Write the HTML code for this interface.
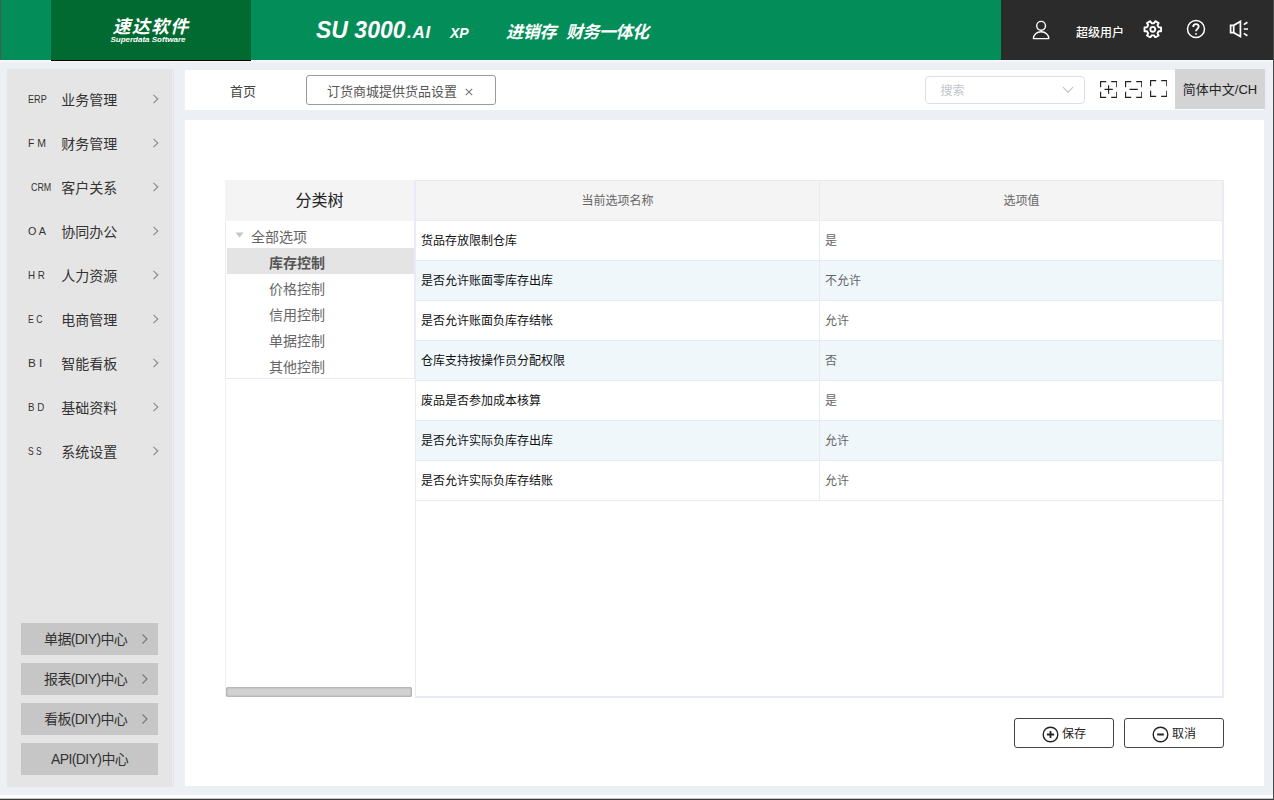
<!DOCTYPE html>
<html lang="zh-CN">
<head>
<meta charset="utf-8">
<title>订货商城提供货品设置</title>
<style>
*{box-sizing:border-box;margin:0;padding:0}
html,body{width:1274px;height:800px;overflow:hidden}
body{position:relative;background:#eceff4;font-family:"Liberation Sans","Noto Sans CJK SC",sans-serif;color:#333;font-size:12px}
.abs{position:absolute}
/* header */
#hdr{left:0;top:0;width:1274px;height:60px;background:#038d58}
#hdr .edge{left:0;top:0;width:1px;height:60px;background:#4a5a52}
#logo{left:51px;top:0;width:200px;height:60px;background:#006a30;color:#fff;text-align:center}
#logo .cn{left:0px;width:200px;top:15px;font-size:18px;line-height:24px;font-weight:700;font-style:italic;letter-spacing:1.3px}
#logo .en{left:-3px;width:200px;top:35px;font-size:8px;line-height:9px;font-weight:700;font-style:italic}
.ht{color:#fff;font-weight:700;font-style:italic;white-space:nowrap}
#dark{left:1001px;top:0;width:273px;height:60px;background:#2b2b2b}
/* sidebar */
#side{left:7px;top:69px;width:165px;height:718px;background:#e6e5e5}
.mi{left:0;width:165px;height:44px}
.mi .pre{left:21px;top:0;line-height:44px;font-size:11px;color:#333;white-space:pre;transform-origin:0 50%}
.mi .nm{left:54.3px;top:0.6px;line-height:44px;font-size:14px;color:#333;white-space:nowrap}
.mi svg{left:145px;top:16px}
.diy{left:14px;width:137px;height:32px;background:#c6c6c6;font-size:14px;color:#333;line-height:32px;white-space:nowrap;letter-spacing:-0.6px}
/* tab bar */
#tabs{left:185px;top:70px;width:1079px;height:40px;background:#fff}
/* panel */
#panel{left:185px;top:120px;width:1079px;height:666px;background:#fff}
.row{left:415px;width:808px;height:40px;border-bottom:1px solid #e8ebf3}
.row .a{left:6px;top:1.2px;line-height:39px;font-size:12px;color:#111;white-space:nowrap}
.row .b{left:410px;top:1.2px;line-height:39px;font-size:12px;color:#666;white-space:nowrap}
.row.alt{background:#f0f7fb}
.tn{left:227px;width:187px;height:26px;line-height:26px;font-size:14px;color:#666;white-space:nowrap}
.tn span{position:absolute;left:42px;top:1.5px}
.btn{top:718px;width:100px;height:30px;border:1px solid #444;border-radius:3px;background:#fff;font-size:12px;color:#222;line-height:28px}
</style>
</head>
<body>
<!-- HEADER -->
<div id="hdr" class="abs">
  <div class="abs edge"></div>
  <div id="logo" class="abs">
    <div class="abs cn">速达软件</div>
    <div class="abs en">Superdata Software</div>
  </div>
  <div class="abs ht" style="left:316px;top:16px;font-size:23px;line-height:28px">SU 3000</div>
  <div class="abs ht" style="left:407px;top:22px;font-size:17px;line-height:22px;letter-spacing:0.8px">.AI</div>
  <div class="abs ht" style="left:450px;top:23px;font-size:14px;line-height:20px">XP</div>
  <div class="abs ht" style="left:506px;top:20.5px;font-size:17px;line-height:24px;letter-spacing:-0.3px">进销存</div>
  <div class="abs ht" style="left:566px;top:20.5px;font-size:17px;line-height:24px;letter-spacing:-0.5px">财务一体化</div>
  <div id="dark" class="abs">
    <svg class="abs" style="left:30px;top:20px" width="20" height="20" viewBox="0 0 20 20" fill="none" stroke="#fff" stroke-width="1.4"><circle cx="10.1" cy="5.8" r="4.4"/><path d="M2.4 18.6 A7.7 6.9 0 0 1 17.8 18.6 Z" stroke-linejoin="round"/></svg>
    <div class="abs" style="left:75px;top:23.5px;font-size:12px;line-height:18px;color:#fff;font-weight:500;white-space:nowrap">超级用户</div>
    <svg class="abs" style="left:142.4px;top:19.6px" width="19.6" height="18.6" viewBox="0 0 20 19" fill="none" stroke="#fff" stroke-width="1.9" stroke-linejoin="round"><path d="M15.96 7.45 L18.48 7.54 L18.48 11.46 L15.96 11.55 L14.75 13.63 L15.93 15.86 L12.54 17.82 L11.20 15.68 L8.80 15.68 L7.46 17.82 L4.07 15.86 L5.25 13.63 L4.04 11.55 L1.52 11.46 L1.52 7.54 L4.04 7.45 L5.25 5.37 L4.07 3.14 L7.46 1.18 L8.80 3.32 L11.20 3.32 L12.54 1.18 L15.93 3.14 L14.75 5.37 Z"/><circle cx="10" cy="9.5" r="2.5"/></svg>
    <svg class="abs" style="left:185.2px;top:19.3px" width="20" height="20" viewBox="0 0 20 20" fill="none" stroke="#fff" stroke-width="1.5"><circle cx="10" cy="10" r="8.5"/><path d="M7.2 7.9 C7.2 6.1 8.4 5.2 10 5.2 S12.7 6.2 12.7 7.8 C12.7 9.8 10 9.9 10 12.2" stroke-width="1.8"/><circle cx="10" cy="14.9" r="0.95" fill="#fff" stroke="none"/></svg>
    <svg class="abs" style="left:228px;top:20px" width="21" height="19" viewBox="0 0 21 19" fill="none" stroke="#fff" stroke-width="1.7"><path d="M1.6 5.3 H4.7 L11.4 1.4 V16.6 L4.7 12.7 H1.6 Z M4.7 5.3 V12.7" stroke-linejoin="miter"/><path d="M14.8 4.6 L18.4 2.2 M14.8 9 H19 M14.8 13.4 L18.4 15.8" /></svg>
  </div>
</div>

<!-- SIDEBAR -->
<div id="side" class="abs">
  <div class="abs mi" style="top:8px"><div class="abs pre" style="left:21.3px;transform:scaleX(0.83)">ERP</div><div class="abs nm">业务管理</div><svg class="abs" width="8" height="12" viewBox="0 0 8 12" fill="none" stroke="#888" stroke-width="1.1"><path d="M1.5 1.8 L5.8 6 L1.5 10.2"/></svg></div>
  <div class="abs mi" style="top:52px"><div class="abs pre" style="left:20.5px;transform:scaleX(0.95)">F M</div><div class="abs nm">财务管理</div><svg class="abs" width="8" height="12" viewBox="0 0 8 12" fill="none" stroke="#888" stroke-width="1.1"><path d="M1.5 1.8 L5.8 6 L1.5 10.2"/></svg></div>
  <div class="abs mi" style="top:96px"><div class="abs pre" style="left:23.5px;transform:scaleX(0.81)">CRM</div><div class="abs nm">客户关系</div><svg class="abs" width="8" height="12" viewBox="0 0 8 12" fill="none" stroke="#888" stroke-width="1.1"><path d="M1.5 1.8 L5.8 6 L1.5 10.2"/></svg></div>
  <div class="abs mi" style="top:140px"><div class="abs pre" style="left:21px;transform:scaleX(0.98)">O A</div><div class="abs nm">协同办公</div><svg class="abs" width="8" height="12" viewBox="0 0 8 12" fill="none" stroke="#888" stroke-width="1.1"><path d="M1.5 1.8 L5.8 6 L1.5 10.2"/></svg></div>
  <div class="abs mi" style="top:184px"><div class="abs pre" style="left:20.8px;transform:scaleX(0.886)">H R</div><div class="abs nm">人力资源</div><svg class="abs" width="8" height="12" viewBox="0 0 8 12" fill="none" stroke="#888" stroke-width="1.1"><path d="M1.5 1.8 L5.8 6 L1.5 10.2"/></svg></div>
  <div class="abs mi" style="top:228px"><div class="abs pre" style="left:20.8px;transform:scaleX(0.785)">E C</div><div class="abs nm">电商管理</div><svg class="abs" width="8" height="12" viewBox="0 0 8 12" fill="none" stroke="#888" stroke-width="1.1"><path d="M1.5 1.8 L5.8 6 L1.5 10.2"/></svg></div>
  <div class="abs mi" style="top:272px"><div class="abs pre" style="left:20.8px;transform:scaleX(1.07)">B I</div><div class="abs nm">智能看板</div><svg class="abs" width="8" height="12" viewBox="0 0 8 12" fill="none" stroke="#888" stroke-width="1.1"><path d="M1.5 1.8 L5.8 6 L1.5 10.2"/></svg></div>
  <div class="abs mi" style="top:316px"><div class="abs pre" style="left:20.8px;transform:scaleX(0.883)">B D</div><div class="abs nm">基础资料</div><svg class="abs" width="8" height="12" viewBox="0 0 8 12" fill="none" stroke="#888" stroke-width="1.1"><path d="M1.5 1.8 L5.8 6 L1.5 10.2"/></svg></div>
  <div class="abs mi" style="top:360px"><div class="abs pre" style="left:20.8px;transform:scaleX(0.767)">S S</div><div class="abs nm">系统设置</div><svg class="abs" width="8" height="12" viewBox="0 0 8 12" fill="none" stroke="#888" stroke-width="1.1"><path d="M1.5 1.8 L5.8 6 L1.5 10.2"/></svg></div>
  <div class="abs diy" style="top:554px"><span class="abs" style="left:23px;top:0">单据(DIY)中心</span><svg class="abs" style="left:120px;top:10px" width="8" height="12" viewBox="0 0 8 12" fill="none" stroke="#777" stroke-width="1.1"><path d="M1.5 1.5 L6 6 L1.5 10.5"/></svg></div>
  <div class="abs diy" style="top:594px"><span class="abs" style="left:23px;top:0">报表(DIY)中心</span><svg class="abs" style="left:120px;top:10px" width="8" height="12" viewBox="0 0 8 12" fill="none" stroke="#777" stroke-width="1.1"><path d="M1.5 1.5 L6 6 L1.5 10.5"/></svg></div>
  <div class="abs diy" style="top:634px"><span class="abs" style="left:23px;top:0">看板(DIY)中心</span><svg class="abs" style="left:120px;top:10px" width="8" height="12" viewBox="0 0 8 12" fill="none" stroke="#777" stroke-width="1.1"><path d="M1.5 1.5 L6 6 L1.5 10.5"/></svg></div>
  <div class="abs diy" style="top:674px"><span class="abs" style="left:30px;top:0">API(DIY)中心</span></div>
</div>

<div class="abs" style="left:172px;top:69px;width:1px;height:718px;background:#ececee"></div>
<div class="abs" style="left:173px;top:69px;width:1px;height:718px;background:#e4e5ea"></div>
<!-- TAB BAR -->
<div id="tabs" class="abs">
  <div class="abs" style="left:45px;top:1.5px;line-height:40px;font-size:13px;color:#444;white-space:nowrap">首页</div>
  <div class="abs" style="left:121px;top:5px;width:190px;height:30px;border:1px solid #9a9a9a;border-radius:3px;background:#fff"></div>
  <div class="abs" style="left:142px;top:1.5px;line-height:40px;font-size:13px;color:#555;white-space:nowrap">订货商城提供货品设置</div>
  <svg class="abs" style="left:279px;top:17px" width="10" height="10" viewBox="0 0 10 10" stroke="#777" stroke-width="1.1" fill="none"><path d="M1.8 1.8 L8.2 8.2 M8.2 1.8 L1.8 8.2"/></svg>
  <div class="abs" style="left:740px;top:6px;width:160px;height:28px;border:1px solid #dcdfe6;border-radius:4px;background:#fff"></div>
  <div class="abs" style="left:755.5px;top:7px;line-height:28px;font-size:12px;color:#c0c4cc;white-space:nowrap">搜索</div>
  <svg class="abs" style="left:877px;top:16px" width="12" height="8" viewBox="0 0 12 8" fill="none" stroke="#c0c4cc" stroke-width="1.1"><path d="M1 1.2 L6 6.4 L11 1.2"/></svg>
  <svg class="abs" style="left:914.9px;top:11px" width="17.4" height="17" viewBox="0 0 17.4 17" fill="none" stroke="#222" stroke-width="1.15"><path d="M0.6 6.2 V0.6 H6.2 M11.2 0.6 H16.8 V6.2 M16.8 10.8 V16.4 H11.2 M6.2 16.4 H0.6 V10.8 M4.5 8.4 H12.8 M8.6 4.2 V12.7"/></svg>
  <svg class="abs" style="left:940px;top:11px" width="17.4" height="17" viewBox="0 0 17.4 17" fill="none" stroke="#222" stroke-width="1.15"><path d="M0.6 6.2 V0.6 H6.2 M11.2 0.6 H16.8 V6.2 M16.8 10.8 V16.4 H11.2 M6.2 16.4 H0.6 V10.8 M4.5 8.4 H12.8"/></svg>
  <svg class="abs" style="left:964.9px;top:10.1px" width="17.4" height="17" viewBox="0 0 17.4 17" fill="none" stroke="#222" stroke-width="1.15"><path d="M0.6 6.2 V0.6 H6.2 M11.2 0.6 H16.8 V6.2 M16.8 10.8 V16.4 H11.2 M6.2 16.4 H0.6 V10.8"/></svg>
  <div class="abs" style="left:990px;top:-1px;width:90px;height:39.5px;background:#d4d4d4;text-align:center;line-height:41px;font-size:13px;color:#222;white-space:nowrap">简体中文/CH</div>
</div>

<!-- PANEL -->
<div id="panel" class="abs"></div>
<div class="abs" style="left:225px;top:180px;width:190px;height:42px;background:#f4f4f4;border-bottom:1px solid #e8ebf3;border-right:1px solid #e8ebf3;text-align:center;line-height:42px;font-size:16px;color:#222">分类树</div>
<div class="abs" style="left:225px;top:221px;width:190px;height:158px;border:1px solid #e8ebf3;border-top:none;background:#fff"></div>
<div class="abs" style="left:225px;top:379px;width:1px;height:318px;background:#eef0f6"></div>
<div class="abs tn" style="top:222px"><svg class="abs" style="left:8px;top:10px" width="9" height="6" viewBox="0 0 9 6"><path d="M0.5 0.5 H8.5 L4.5 5.5 Z" fill="#c0c4cc"/></svg><span style="left:24px">全部选项</span></div>
<div class="abs tn" style="top:248px;background:#e4e4e4;font-weight:700;color:#555"><span>库存控制</span></div>
<div class="abs tn" style="top:274px"><span>价格控制</span></div>
<div class="abs tn" style="top:300px"><span>信用控制</span></div>
<div class="abs tn" style="top:326px"><span>单据控制</span></div>
<div class="abs tn" style="top:352px"><span>其他控制</span></div>
<div class="abs" style="left:226px;top:687px;width:186px;height:10px;background:#d2d2d2;box-shadow:inset 0 0 3px 0 rgba(0,0,0,0.34);border-radius:2px"></div>
<div class="abs" style="left:415px;top:180px;width:809px;height:518px;border:1px solid #e8ebf3;border-right-width:2px;border-bottom-width:2px;background:#fff"></div>
<div class="abs" style="left:416px;top:181px;width:806px;height:40px;background:#f4f4f4;border-bottom:1px solid #e8ebf3"></div>
<div class="abs" style="left:416px;top:181px;width:403px;height:40px;text-align:center;line-height:41.4px;font-size:12px;color:#666">当前选项名称</div>
<div class="abs" style="left:820px;top:181px;width:403px;height:40px;text-align:center;line-height:41.4px;font-size:12px;color:#666">选项值</div>
<div class="abs row" style="top:221px;left:416px;width:806px"><div class="abs a" style="left:5px">货品存放限制仓库</div><div class="abs b" style="left:409px">是</div></div>
<div class="abs row alt" style="top:261px;left:416px;width:806px"><div class="abs a" style="left:5px">是否允许账面零库存出库</div><div class="abs b" style="left:409px">不允许</div></div>
<div class="abs row" style="top:301px;left:416px;width:806px"><div class="abs a" style="left:5px">是否允许账面负库存结帐</div><div class="abs b" style="left:409px">允许</div></div>
<div class="abs row alt" style="top:341px;left:416px;width:806px"><div class="abs a" style="left:5px">仓库支持按操作员分配权限</div><div class="abs b" style="left:409px">否</div></div>
<div class="abs row" style="top:381px;left:416px;width:806px"><div class="abs a" style="left:5px">废品是否参加成本核算</div><div class="abs b" style="left:409px">是</div></div>
<div class="abs row alt" style="top:421px;left:416px;width:806px"><div class="abs a" style="left:5px">是否允许实际负库存出库</div><div class="abs b" style="left:409px">允许</div></div>
<div class="abs row" style="top:461px;left:416px;width:806px"><div class="abs a" style="left:5px">是否允许实际负库存结账</div><div class="abs b" style="left:409px">允许</div></div>
<div class="abs" style="left:819px;top:181px;width:1px;height:320px;background:#e8ebf3"></div>
<div class="abs btn" style="left:1014px"><svg class="abs" style="left:26.5px;top:6.5px" width="17" height="17" viewBox="0 0 17 17" fill="none" stroke="#222" stroke-width="1.4"><circle cx="8.5" cy="8.5" r="7.3"/><path d="M4.9 8.5 H12.1 M8.5 4.9 V12.1" stroke-width="1.8"/></svg><span class="abs" style="left:47px;top:1px">保存</span></div>
<div class="abs btn" style="left:1124px"><svg class="abs" style="left:26.5px;top:6.5px" width="17" height="17" viewBox="0 0 17 17" fill="none" stroke="#222" stroke-width="1.4"><circle cx="8.5" cy="8.5" r="7.3"/><path d="M5.2 8.5 H11.8" stroke-width="2"/></svg><span class="abs" style="left:47px;top:1px">取消</span></div>


<div class="abs" style="left:0;top:60px;width:1274px;height:2px;background:#f7f8fb"></div>
<div class="abs" style="left:51px;top:60px;width:200px;height:1px;background:#000"></div>
<div class="abs" style="left:0;top:795px;width:1274px;height:4px;background:#fdfdfe"></div>
<div class="abs" style="left:0;top:798px;width:1274px;height:1px;background:#c8c8c8"></div>
<div class="abs" style="left:0;top:799px;width:1274px;height:1px;background:#3a3a3a"></div>
<div class="abs" style="left:1273px;top:0;width:1px;height:800px;background:#4a4a4a"></div>
</body>
</html>
